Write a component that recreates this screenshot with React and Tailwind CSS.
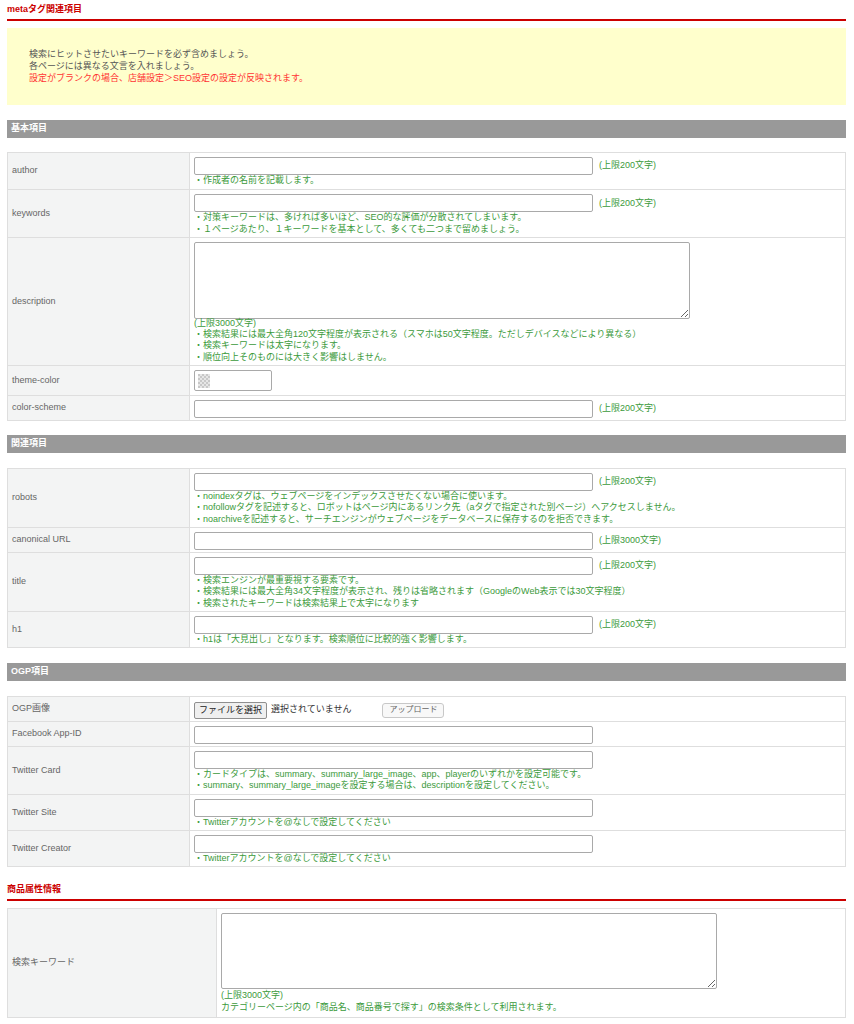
import React from 'react';

const font = { fontFamily: '"Liberation Sans", "Noto Sans CJK JP", sans-serif' };

const Hint = ({ children, className = '' }) => (
  <div className={`text-[#3b9a3b] leading-[11.3px] whitespace-nowrap ${className}`}>{children}</div>
);

const TextInput = ({ limit }) => (
  <div className="flex items-center gap-[6px]">
    <input type="text" className="block w-[399px] h-[18px] border border-[#a9a9a9] rounded-[2px] bg-white outline-none" />
    {limit && <span className="text-[#3b9a3b]">{limit}</span>}
  </div>
);

const Row = ({ label, children, labelWidth = 'w-[182px]' }) => (
  <tr className="border-b border-[#dedede]">
    <th className={`${labelWidth} bg-[#f3f4f4] text-left font-normal align-middle pl-[4px] text-[#666] border-r border-[#dedede]`}>
      {label}
    </th>
    <td className="pt-[4px] pb-[2px] px-[4px] align-top bg-white">{children}</td>
  </tr>
);

const GrayBar = ({ children }) => (
  <div className="h-[18px] bg-[#999999] text-white font-bold pl-[4px] flex items-center">{children}</div>
);

const RedHeading = ({ children }) => (
  <div className="text-[#cc0000] font-bold leading-[12px] pb-[4px] border-b-2 border-[#cc0000]">{children}</div>
);

const ColorSwatch = () => (
  <div className="w-[78px] h-[21px] border border-[#a9a9a9] rounded-[2px] bg-white flex items-center pl-[3px]">
    <svg width="12" height="14" viewBox="0 0 12 14">
      <rect width="12" height="14" fill="#e6e6e6" />
      {[0, 1, 2, 3, 4, 5, 6].map((r) =>
        [0, 1, 2, 3, 4, 5].map((c) =>
          (r + c) % 2 === 0 ? <rect key={`${r}-${c}`} x={c * 2} y={r * 2} width="2" height="2" fill="#c8c8c8" /> : null
        )
      )}
    </svg>
  </div>
);

export default function App() {
  return (
    <div className="bg-white text-[9px] text-[#555] pl-[7px] pr-[8px] pt-[3px] pb-[8px] w-[854px]" style={font}>
      <RedHeading>metaタグ関連項目</RedHeading>

      <div className="mt-[7px] bg-[#ffffcc] h-[77px] pl-[22px] pt-[20px] leading-[12px]">
        <div>検索にヒットさせたいキーワードを必ず含めましょう。</div>
        <div>各ページには異なる文言を入れましょう。</div>
        <div className="text-[#ff3333]">設定がブランクの場合、店舗設定＞SEO設定の設定が反映されます。</div>
      </div>

      <div className="mt-[15px]">
        <GrayBar>基本項目</GrayBar>
      </div>

      <table className="mt-[14px] w-full border-collapse border border-[#dedede]">
        <tbody>
          <Row label="author">
            <TextInput limit="(上限200文字)" />
            <Hint className="pb-[1px]">・作成者の名前を記載します。</Hint>
          </Row>
          <Row label="keywords">
            <TextInput limit="(上限200文字)" />
            <Hint>・対策キーワードは、多ければ多いほど、SEO的な評価が分散されてしまいます。</Hint>
            <Hint>・１ページあたり、１キーワードを基本として、多くても二つまで留めましょう。</Hint>
          </Row>
          <Row label="description">
            <textarea className="block w-[496px] h-[77px] border border-[#a9a9a9] rounded-[2px] bg-white outline-none" />
            <Hint className="-mt-[1px]">(上限3000文字)</Hint>
            <Hint>・検索結果には最大全角120文字程度が表示される（スマホは50文字程度。ただしデバイスなどにより異なる）</Hint>
            <Hint>・検索キーワードは太字になります。</Hint>
            <Hint>・順位向上そのものには大きく影響はしません。</Hint>
          </Row>
          <Row label="theme-color">
            <div className="pb-[2px]">
              <ColorSwatch />
            </div>
          </Row>
          <Row label="color-scheme">
            <TextInput limit="(上限200文字)" />
          </Row>
        </tbody>
      </table>

      <div className="mt-[14px]">
        <GrayBar>関連項目</GrayBar>
      </div>

      <table className="mt-[15px] w-full border-collapse border border-[#dedede]">
        <tbody>
          <Row label="robots">
            <TextInput limit="(上限200文字)" />
            <Hint>・noindexタグは、ウェブページをインデックスさせたくない場合に使います。</Hint>
            <Hint>・nofollowタグを記述すると、ロボットはページ内にあるリンク先（aタグで指定された別ページ）へアクセスしません。</Hint>
            <Hint>・noarchiveを記述すると、サーチエンジンがウェブページをデータベースに保存するのを拒否できます。</Hint>
          </Row>
          <Row label="canonical URL">
            <TextInput limit="(上限3000文字)" />
          </Row>
          <Row label="title">
            <TextInput limit="(上限200文字)" />
            <Hint>・検索エンジンが最重要視する要素です。</Hint>
            <Hint>・検索結果には最大全角34文字程度が表示され、残りは省略されます（GoogleのWeb表示では30文字程度）</Hint>
            <Hint>・検索されたキーワードは検索結果上で太字になります</Hint>
          </Row>
          <Row label="h1">
            <TextInput limit="(上限200文字)" />
            <Hint>・h1は「大見出し」となります。検索順位に比較的強く影響します。</Hint>
          </Row>
        </tbody>
      </table>

      <div className="mt-[15px]">
        <GrayBar>OGP項目</GrayBar>
      </div>

      <table className="mt-[15px] w-full border-collapse border border-[#dedede]">
        <tbody>
          <Row label="OGP画像">
            <div className="flex items-center h-[18px]">
              <button className="h-[17px] px-[4px] bg-[#efefef] border border-[#8f8f8f] rounded-[2px] text-[#222] text-[9px] leading-none">
                ファイルを選択
              </button>
              <span className="ml-[4px] text-[#333]">選択されていません</span>
              <button className="ml-[31px] h-[15px] w-[62px] bg-[#f8f8f8] border border-[#c8c8c8] rounded-[3px] text-[#666] text-[8px] leading-none">
                アップロード
              </button>
            </div>
          </Row>
          <Row label="Facebook App-ID">
            <TextInput />
          </Row>
          <Row label="Twitter Card">
            <TextInput />
            <Hint>・カードタイプは、summary、summary_large_image、app、playerのいずれかを設定可能です。</Hint>
            <Hint>・summary、summary_large_imageを設定する場合は、descriptionを設定してください。</Hint>
          </Row>
          <Row label="Twitter Site">
            <TextInput />
            <Hint>・Twitterアカウントを@なしで設定してください</Hint>
          </Row>
          <Row label="Twitter Creator">
            <TextInput />
            <Hint>・Twitterアカウントを@なしで設定してください</Hint>
          </Row>
        </tbody>
      </table>

      <div className="mt-[16px]">
        <RedHeading>商品属性情報</RedHeading>
      </div>

      <table className="mt-[7px] w-full border-collapse border border-[#dedede]">
        <tbody>
          <Row label="検索キーワード" labelWidth="w-[209px]">
            <textarea className="block w-[496px] h-[76px] border border-[#a9a9a9] rounded-[2px] bg-white outline-none" />
            <Hint className="pt-[1px]">(上限3000文字)</Hint>
            <Hint className="pb-[2px]">カテゴリーページ内の「商品名、商品番号で探す」の検索条件として利用されます。</Hint>
          </Row>
        </tbody>
      </table>
    </div>
  );
}
